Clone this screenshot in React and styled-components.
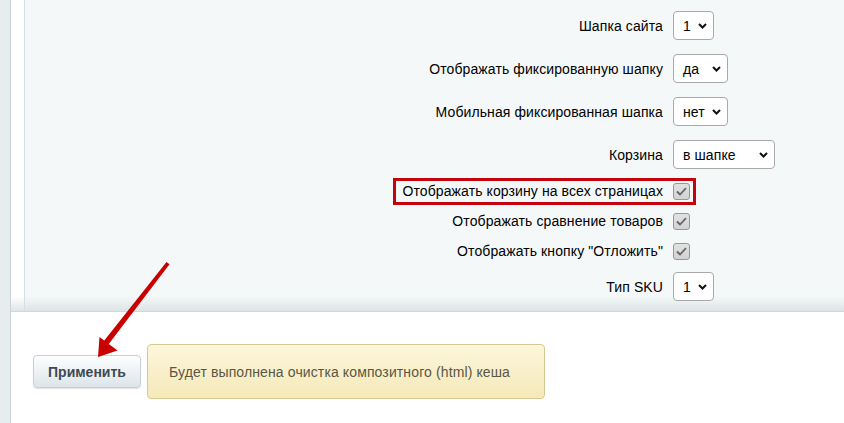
import React from "react";
import styled, { createGlobalStyle } from "styled-components";

const GlobalStyle = createGlobalStyle`
  html, body {
    margin: 0;
    padding: 0;
    background: #fff;
    font-family: "Liberation Sans", Arial, sans-serif;
  }
`;

const settings = [
  { type: "select", label: "Шапка сайта", value: "1", width: 41, height: 43 },
  { type: "select", label: "Отображать фиксированную шапку", value: "да", width: 55, height: 43 },
  { type: "select", label: "Мобильная фиксированная шапка", value: "нет", width: 55, height: 43 },
  { type: "select", label: "Корзина", value: "в шапке", width: 102, height: 36 },
  { type: "check", label: "Отображать корзину на всех страницах", marked: true },
  { type: "check", label: "Отображать сравнение товаров" },
  { type: "check", label: "Отображать кнопку \"Отложить\"" },
  { type: "select", label: "Тип SKU", value: "1", width: 41, height: 29, top: 6 },
];

const Chevron = () => (
  <svg width="9" height="6" viewBox="0 0 9 6">
    <path d="M1 1l3.5 3.5L8 1" fill="none" stroke="#111" strokeWidth="2" />
  </svg>
);

const Tick = () => (
  <svg width="11" height="9" viewBox="0 0 11 9">
    <path d="M1 4.5l3 3L10 1.2" fill="none" stroke="#666" strokeWidth="1.8" />
  </svg>
);

const SettingRow = ({ item }) => (
  <Row $height={item.height || 30} $top={item.top || 0} $centered={item.type === "check"}>
    <Label>
      <LabelText $marked={item.marked}>{item.label}</LabelText>
    </Label>
    {item.type === "select" ? (
      <Select $width={item.width}>
        <span>{item.value}</span>
        <Chevron />
      </Select>
    ) : (
      <Checkbox>
        <Tick />
      </Checkbox>
    )}
  </Row>
);

const App = () => {
  return (
    <>
      <GlobalStyle />
      <Page>
        <Strip />
        <Main>
          <TopSection>
            <Panel>
              {settings.map((item) => (
                <SettingRow key={item.label} item={item} />
              ))}
            </Panel>
          </TopSection>
          <Footer>
            <ApplyButton>Применить</ApplyButton>
            <Note>Будет выполнена очистка композитного (html) кеша</Note>
          </Footer>
        </Main>
        <Pointer width="844" height="423" viewBox="0 0 844 423">
          <polygon points="166.5,262 169.5,264.2 108,345 103.5,341.5" fill="#c80000" />
          <polygon points="98,357 99.5,337 117.5,350.5" fill="#c80000" />
        </Pointer>
      </Page>
    </>
  );
};

const Page = styled.div`
  position: relative;
  display: flex;
  width: 844px;
  height: 423px;
  overflow: hidden;
`;

const Strip = styled.div`
  flex: 0 0 10px;
  background: #e7ecee;
  border-right: 1px solid #c9d4d8;
`;

const Main = styled.div`
  flex: 1;
  display: flex;
  flex-direction: column;
`;

const TopSection = styled.div`
  padding-left: 13px;
  background: linear-gradient(to bottom, #fff calc(100% - 15px), #dfe5e8 100%);
  border-bottom: 1px solid #cfd8dc;
`;

const Panel = styled.div`
  display: flex;
  flex-direction: column;
  padding: 11px 0 10px;
  border-left: 1px solid #d5e0e4;
  background: linear-gradient(to bottom, #f5f8f9 calc(100% - 15px), #dde4e7 100%);
`;

const Row = styled.div`
  display: flex;
  align-items: ${(p) => (p.$centered ? "center" : "flex-start")};
  gap: 10px;
  height: ${(p) => p.$height}px;
  margin-top: ${(p) => p.$top}px;
`;

const Label = styled.div`
  flex: 0 0 638px;
  display: flex;
  justify-content: flex-end;
  align-items: center;
  min-height: 29px;
  font-size: 14px;
  letter-spacing: 0.1px;
  color: #000;
  white-space: nowrap;
`;

const LabelText = styled.span`
  position: relative;

  &::before {
    content: "";
    display: ${(p) => (p.$marked ? "block" : "none")};
    position: absolute;
    left: -9px;
    right: -33px;
    top: -5px;
    bottom: -6px;
    border: 3px solid #c4040c;
  }
`;

const Select = styled.div`
  box-sizing: border-box;
  width: ${(p) => p.$width}px;
  height: 29px;
  display: flex;
  align-items: center;
  justify-content: space-between;
  padding: 0 6px 0 9px;
  background: #fff;
  border: 1px solid #a9a9a9;
  border-radius: 4px;
  font-size: 14px;
  letter-spacing: 0.1px;
  color: #000;
`;

const Checkbox = styled.span`
  box-sizing: border-box;
  width: 17px;
  height: 17px;
  display: flex;
  align-items: center;
  justify-content: center;
  background: linear-gradient(#e2e2e2, #d2d2d2);
  border: 1px solid #979797;
  border-radius: 3px;
`;

const Footer = styled.div`
  display: flex;
  align-items: center;
  gap: 6px;
  padding: 32px 0 0 22px;
`;

const ApplyButton = styled.button`
  box-sizing: border-box;
  width: 108px;
  height: 33px;
  padding: 0;
  font-family: "Liberation Sans", Arial, sans-serif;
  font-size: 14px;
  font-weight: bold;
  color: #3d4a54;
  background: linear-gradient(#fdfefe, #dde5e9);
  border: 1px solid #c6d0d5;
  border-radius: 4px;
  box-shadow: 0 1px 1px rgba(0, 0, 0, 0.12);
`;

const Note = styled.div`
  box-sizing: border-box;
  width: 398px;
  height: 55px;
  display: flex;
  align-items: center;
  padding-left: 21px;
  font-size: 14px;
  letter-spacing: 0.12px;
  color: #5b5643;
  background: linear-gradient(#fcf6db, #f5e9b9);
  border: 1px solid #d6c893;
  border-radius: 4px;
`;

const Pointer = styled.svg`
  position: absolute;
  left: 0;
  top: 0;
  pointer-events: none;
`;

export default App;
